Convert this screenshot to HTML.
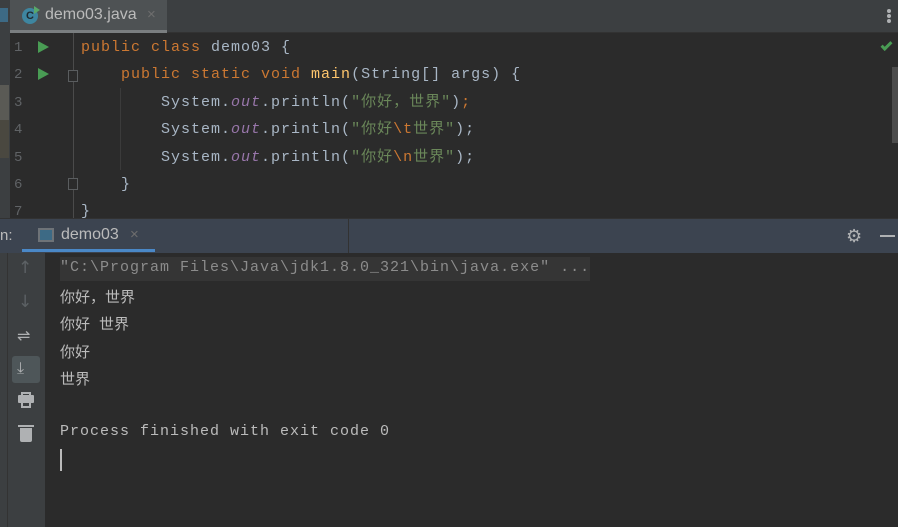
<!DOCTYPE html>
<html><head><meta charset="utf-8"><style>
*{margin:0;padding:0;box-sizing:border-box}
body{width:898px;height:527px;overflow:hidden;background:#2b2b2b;position:relative;font-family:"Liberation Mono","Noto Sans CJK SC",monospace}
.abs{position:absolute}
.code{position:absolute;font-size:15px;letter-spacing:1px;white-space:pre;color:#a9b7c6;line-height:20px}
.k{color:#cc7832}.o{color:#9876aa;font-style:italic}.s{color:#6a8759}.e{color:#cc7832}
.ln{position:absolute;left:14px;font-size:14px;color:#606366;font-family:"Liberation Mono",monospace}
.run{position:absolute;left:38px;width:0;height:0;border-left:11px solid #499c54;border-top:6px solid transparent;border-bottom:6px solid transparent}
.out{position:absolute;left:60px;font-size:15px;color:#bbbbbb;white-space:pre;letter-spacing:1px}
</style></head><body>
<div class="abs" style="left:0;top:0;width:898px;height:33px;background:#3c3f41;border-bottom:1px solid #323232"></div>
<div class="abs" style="left:0;top:0;width:10px;height:220px;background:#3c3f41"></div>
<div class="abs" style="left:0;top:8px;width:8px;height:14px;background:#3d6a85"></div>
<div class="abs" style="left:0;top:85px;width:9px;height:35px;background:#5a5a55"></div>
<div class="abs" style="left:0;top:120px;width:9px;height:38px;background:#4a4840"></div>
<div class="abs" style="left:10px;top:0;width:157px;height:33px;background:#4e5254"></div>
<div class="abs" style="left:10px;top:30px;width:157px;height:3px;background:#7a7e80"></div>
<div class="abs" style="left:22px;top:8px;width:16px;height:16px;border-radius:50%;background:#3e86a0;color:#1e2a30;font:bold 11px 'Liberation Sans',sans-serif;text-align:center;line-height:16px">C</div>
<div class="abs" style="left:34px;top:6px;width:0;height:0;border-left:6px solid #59a869;border-top:4px solid transparent;border-bottom:4px solid transparent"></div>
<div class="abs" style="left:45px;top:6px;font:16px 'Liberation Sans',sans-serif;color:#bbbbbb">demo03.java</div>
<div class="abs" style="left:147px;top:6px;font:15px 'Liberation Sans',sans-serif;color:#6e6e6e">×</div>
<div class="abs" style="left:887px;top:9px;width:4px;height:4px;border-radius:50%;background:#afb1b3;box-shadow:0 5px 0 #afb1b3,0 10px 0 #afb1b3"></div>
<div class="abs" style="left:73px;top:33px;width:1px;height:186px;background:#4b4b4b"></div>
<div class="abs" style="left:120px;top:88px;width:1px;height:82px;background:#3b3b3b"></div>
<div class="ln" style="top:40px">1</div><div class="ln" style="top:67px">2</div><div class="ln" style="top:95px">3</div><div class="ln" style="top:122px">4</div><div class="ln" style="top:150px">5</div><div class="ln" style="top:177px">6</div><div class="ln" style="top:204px">7</div>
<div class="run" style="top:41px"></div><div class="run" style="top:68px"></div>
<div class="abs" style="left:68px;top:70px;width:10px;height:12px;border:1px solid #5a5d5f;background:#2b2b2b"></div>
<div class="abs" style="left:68px;top:178px;width:10px;height:12px;border:1px solid #5a5d5f;background:#2b2b2b"></div>
<div class="code" style="left:81px;top:38px"><span class="k">public class </span>demo03 {</div>
<div class="code" style="left:81px;top:65px">    <span class="k">public static void </span><span style="color:#ffc66d">main</span>(String[] args) {</div>
<div class="code" style="left:81px;top:93px">        System.<span class="o">out</span>.println(<span class="s">"你好，世界"</span>)<span class="k">;</span></div>
<div class="code" style="left:81px;top:120px">        System.<span class="o">out</span>.println(<span class="s">"你好</span><span class="e">\t</span><span class="s">世界"</span>);</div>
<div class="code" style="left:81px;top:148px">        System.<span class="o">out</span>.println(<span class="s">"你好</span><span class="e">\n</span><span class="s">世界"</span>);</div>
<div class="code" style="left:81px;top:175px">    }</div>
<div class="code" style="left:81px;top:202px">}</div>
<div class="abs" style="left:881px;top:42px;width:11px;height:6px;border-left:3px solid #499c54;border-bottom:3px solid #499c54;transform:rotate(-45deg)"></div>
<div class="abs" style="left:892px;top:67px;width:6px;height:76px;background:#4c4c4c"></div>
<div class="abs" style="left:0;top:218px;width:898px;height:35px;background:#3c4450;border-top:1px solid #323232"></div>
<div class="abs" style="left:348px;top:219px;width:1px;height:34px;background:#323232"></div>
<div class="abs" style="left:0;top:227px;font:15px 'Liberation Sans',sans-serif;color:#bbbbbb">n:</div>
<div class="abs" style="left:38px;top:228px;width:16px;height:14px;border:2px solid #6e7378;background:#3d6a85"></div>
<div class="abs" style="left:61px;top:226px;font:16px 'Liberation Sans',sans-serif;color:#bbbbbb">demo03</div>
<div class="abs" style="left:130px;top:226px;font:15px 'Liberation Sans',sans-serif;color:#6e6e6e">×</div>
<div class="abs" style="left:22px;top:249px;width:133px;height:3px;background:#4a88c7"></div>
<div class="abs" style="left:846px;top:226px;font:18px 'DejaVu Sans',sans-serif;color:#afb1b3">⚙</div>
<div class="abs" style="left:880px;top:235px;width:15px;height:2px;background:#afb1b3"></div>
<div class="abs" style="left:0;top:253px;width:45px;height:274px;background:#3c3f41"></div>
<div class="abs" style="left:7px;top:253px;width:1px;height:274px;background:#333"></div>
<div class="abs" style="left:18px;top:258px;font:17px 'DejaVu Sans',sans-serif;color:#5c6164">↑</div>
<div class="abs" style="left:18px;top:292px;font:17px 'DejaVu Sans',sans-serif;color:#5c6164">↓</div>
<div class="abs" style="left:17px;top:326px;font:16px 'DejaVu Sans',sans-serif;color:#afb1b3">⇌</div>
<div class="abs" style="left:12px;top:356px;width:28px;height:27px;border-radius:3px;background:#4e5659"></div>
<div class="abs" style="left:17px;top:358px;font:16px 'DejaVu Sans',sans-serif;color:#afb1b3">⤓</div>
<div class="abs" style="left:18px;top:395px;width:16px;height:8px;background:#afb1b3;border-radius:1px"></div>
<div class="abs" style="left:21px;top:392px;width:10px;height:16px;border:2px solid #afb1b3;background:transparent"></div>
<div class="abs" style="left:20px;top:428px;width:12px;height:14px;background:#afb1b3;border-radius:0 0 2px 2px"></div>
<div class="abs" style="left:18px;top:425px;width:16px;height:2px;background:#afb1b3"></div>
<div class="abs" style="left:60px;top:257px;width:530px;height:24px;background:#353535"></div>
<div class="out" style="top:259px;color:#8c8c8c">"C:\Program Files\Java\jdk1.8.0_321\bin\java.exe" ...</div>
<div class="out" style="top:286px;letter-spacing:0">你好，世界</div>
<div class="out" style="top:313px;letter-spacing:0">你好 世界</div>
<div class="out" style="top:341px;letter-spacing:0">你好</div>
<div class="out" style="top:368px;letter-spacing:0">世界</div>
<div class="out" style="top:423px">Process finished with exit code 0</div>
<div class="abs" style="left:60px;top:449px;width:2px;height:22px;background:#bbbbbb"></div>
</body></html>
